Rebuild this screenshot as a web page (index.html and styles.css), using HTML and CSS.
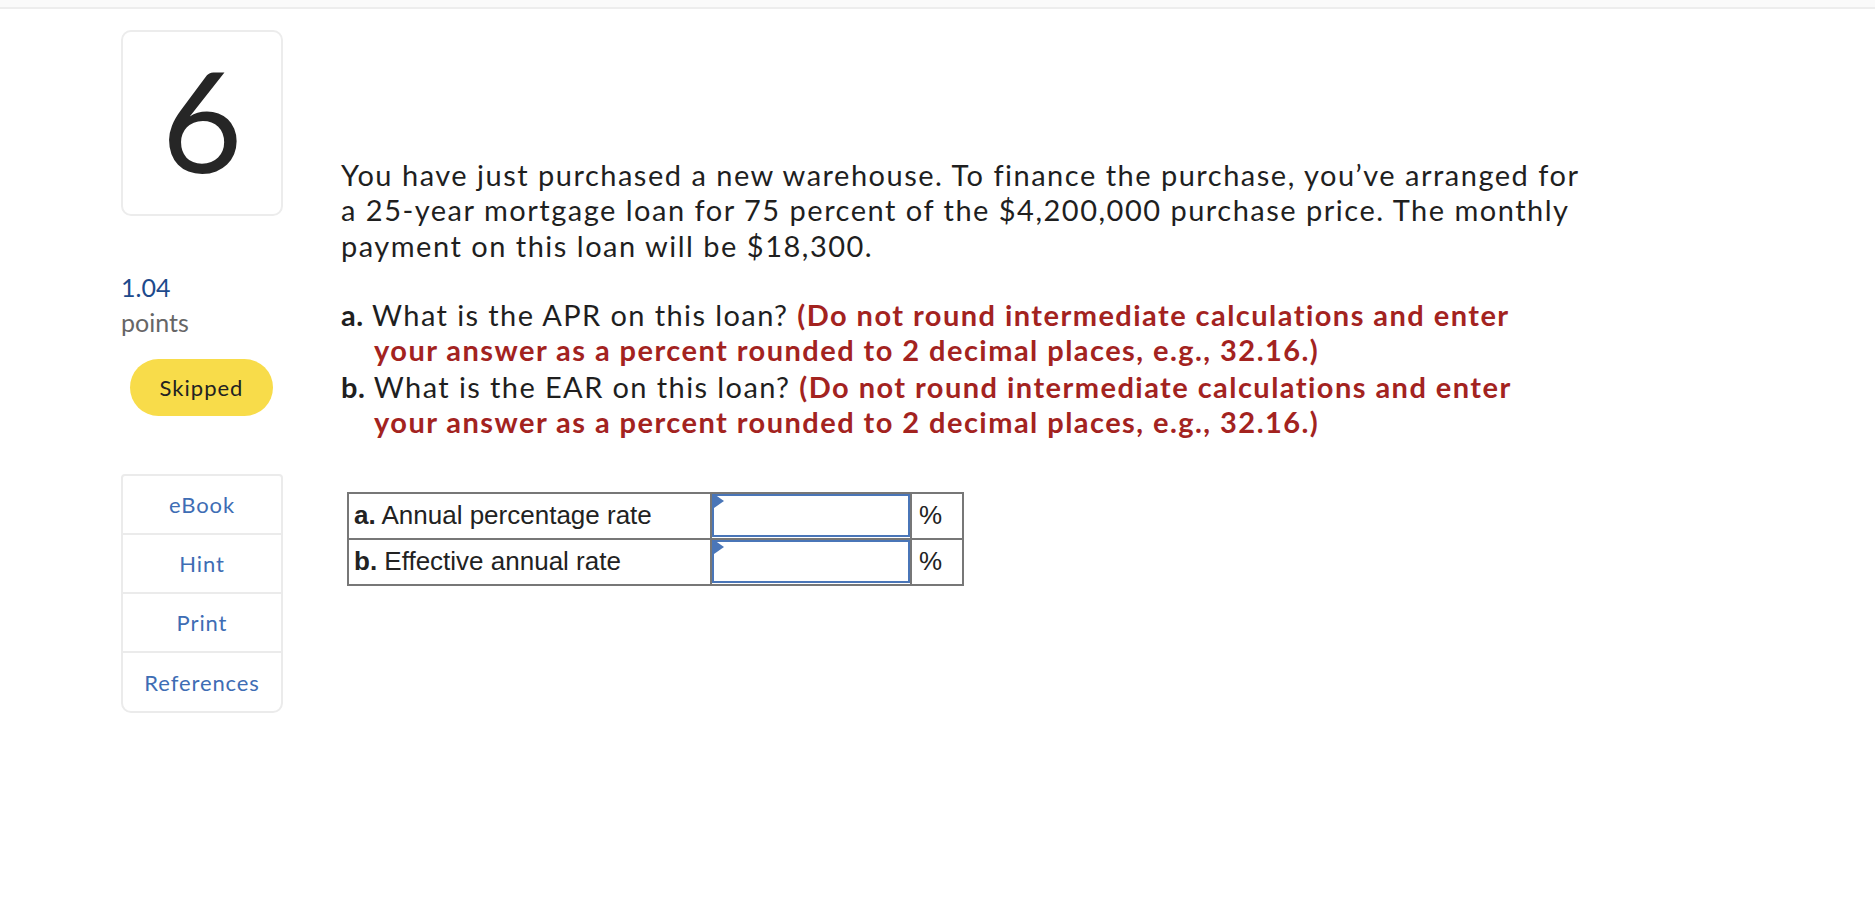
FILE: index.html
```html
<!DOCTYPE html>
<html lang="en">
<head>
<meta charset="utf-8">
<title>Question 6</title>
<link rel="stylesheet" href="styles.css">
</head>
<body>
<div class="topbar"></div>
<div class="page">
  <aside class="side">
    <div class="qnum">6</div>
    <div class="points">
      <div class="pts-val">1.04</div>
      <div class="pts-label">points</div>
    </div>
    <div class="status">Skipped</div>
    <nav class="tools">
      <a class="tool">eBook</a>
      <a class="tool">Hint</a>
      <a class="tool">Print</a>
      <a class="tool">References</a>
    </nav>
  </aside>
  <main class="content">
    <p class="intro">You have just purchased a new warehouse. To finance the purchase, you’ve arranged for<br>a 25-year mortgage loan for 75 percent of the $4,200,000 purchase price. The monthly<br>payment on this loan will be $18,300.</p>
    <div class="parts">
      <p class="part"><b>a.</b> What is the APR on this loan? <span class="note">(Do not round intermediate calculations and enter<br>your answer as a percent rounded to 2 decimal places, e.g., 32.16.)</span></p>
      <p class="part"><b>b.</b> What is the EAR on this loan? <span class="note">(Do not round intermediate calculations and enter<br>your answer as a percent rounded to 2 decimal places, e.g., 32.16.)</span></p>
    </div>
    <table class="answers">
      <tr>
        <td class="label"><b>a.</b> Annual percentage rate</td>
        <td class="inp"><div class="field"><span class="flag"></span></div></td>
        <td class="unit">%</td>
      </tr>
      <tr>
        <td class="label"><b>b.</b> Effective annual rate</td>
        <td class="inp"><div class="field"><span class="flag"></span></div></td>
        <td class="unit">%</td>
      </tr>
    </table>
  </main>
</div>
</body>
</html>
```

FILE: styles.css
```css
* { box-sizing: border-box; }
html, body { margin: 0; padding: 0; background: #fff; }
body {
  font-family: Lato, "Open Sans", sans-serif;
  color: #222;
}
.topbar {
  height: 9px;
  background: #fafafa;
  border-bottom: 2px solid #ededed;
}
.page {
  display: flex;
  padding-left: 121px;
  gap: 58px;
}
.side {
  width: 162px;
  flex: none;
  display: flex;
  flex-direction: column;
  padding-top: 21px;
}
.qnum {
  height: 186px;
  border: 2px solid #ececec;
  border-radius: 10px;
  display: flex;
  align-items: center;
  justify-content: center;
  font-size: 140px;
  line-height: 1;
  color: #262626;
  padding-bottom: 8px;
}
.points {
  margin-top: 54px;
  font-size: 25px;
  line-height: 35px;
}
.pts-val { color: #1d4a8c; }
.pts-label { color: #666; }
.status {
  margin: 19px 0 0 9px;
  width: 143px;
  height: 57px;
  border-radius: 29px;
  background: #f8dc4a;
  display: flex;
  align-items: center;
  justify-content: center;
  font-size: 22px;
  letter-spacing: 1px;
  color: #222;
}
.tools {
  margin-top: 58px;
  border: 2px solid #ebebeb;
  border-radius: 4px 4px 10px 10px;
  display: flex;
  flex-direction: column;
}
.tool {
  height: 59px;
  display: flex;
  align-items: center;
  justify-content: center;
  font-size: 22px;
  letter-spacing: 0.9px;
  color: #3e6db4;
  border-bottom: 2px solid #ebebeb;
}
.tool:last-child { border-bottom: none; height: 58px; }
.content {
  padding-top: 148px;
}
.intro {
  margin: 0;
  font-size: 29px;
  letter-spacing: 1.5px;
  line-height: 35.3px;
  white-space: nowrap;
  color: #1f1f1f;
}
.parts { margin-top: 34px; }
.part {
  margin: 0;
  font-size: 29px;
  letter-spacing: 1.4px;
  line-height: 35px;
  padding-left: 33px;
  text-indent: -33px;
  white-space: nowrap;
  color: #1f1f1f;
}
.part + .part { margin-top: 2px; }
.part b { font-weight: 700; letter-spacing: 0.5px; }
.note { color: #a3231f; font-weight: 700; letter-spacing: 1.45px; }
.answers {
  margin-top: 53px;
  margin-left: 6px;
  border-collapse: collapse;
  font-family: "Liberation Sans", Arial, sans-serif;
  font-size: 26px;
  color: #222;
}
.answers td {
  border: 2px solid #777;
  height: 46px;
  padding: 0;
}
.label {
  width: 363px;
  padding-left: 5px !important;
  white-space: nowrap;
}
.inp { width: 200px; }
.field {
  position: relative;
  height: 43px;
  border: 2px solid #4a76b8;
  margin: 0 0 1px 0;
}
.flag {
  position: absolute;
  left: 0;
  top: -2px;
  width: 0;
  height: 0;
  border-top: 7px solid transparent;
  border-bottom: 7px solid transparent;
  border-left: 10px solid #4a76b8;
}
.unit {
  width: 52px;
  padding-left: 7px !important;
}
```
